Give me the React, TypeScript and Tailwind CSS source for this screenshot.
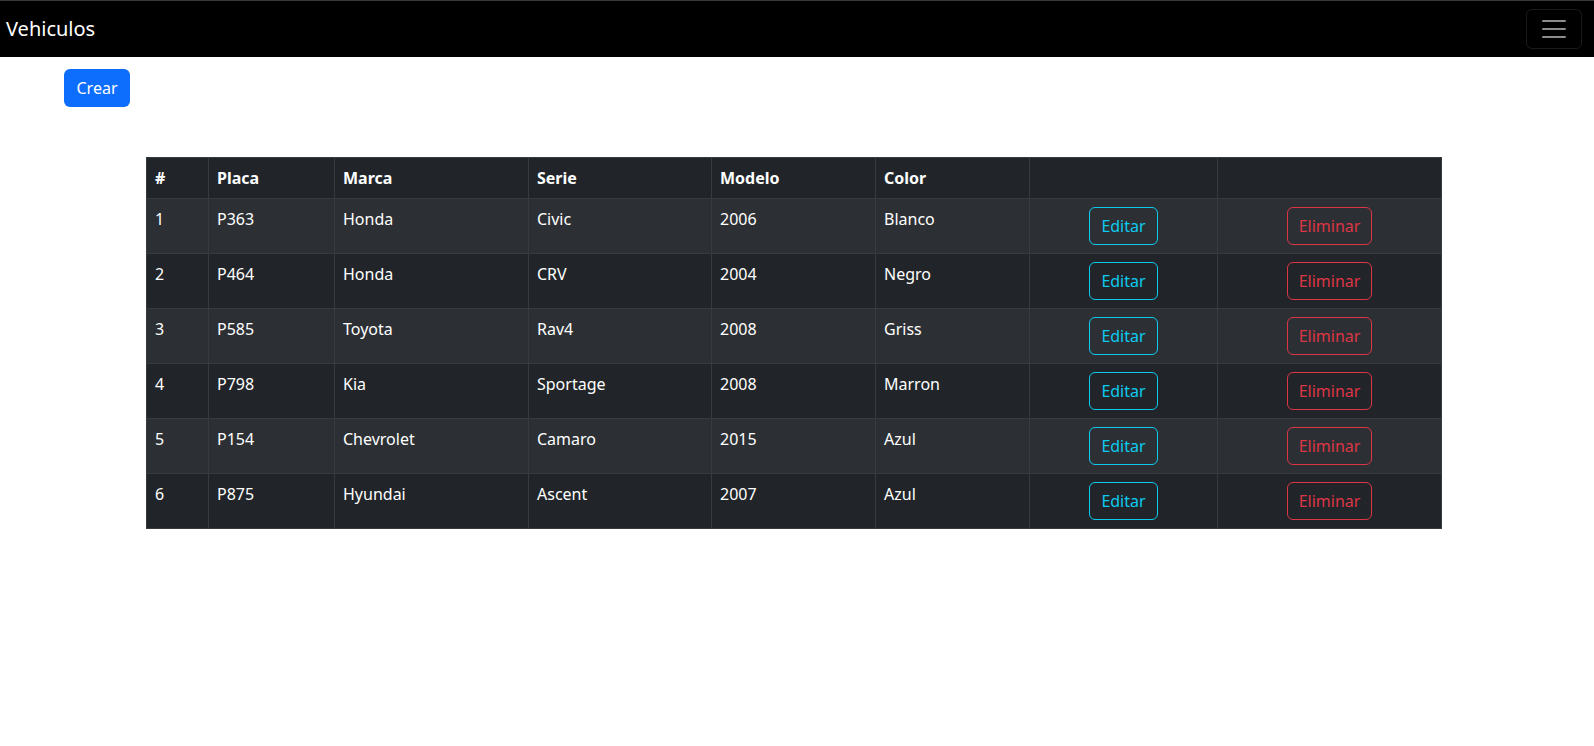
import React from "react";

type Vehiculo = {
  id: number;
  placa: string;
  marca: string;
  serie: string;
  modelo: string;
  color: string;
};

const vehiculos: Vehiculo[] = [
  { id: 1, placa: "P363", marca: "Honda", serie: "Civic", modelo: "2006", color: "Blanco" },
  { id: 2, placa: "P464", marca: "Honda", serie: "CRV", modelo: "2004", color: "Negro" },
  { id: 3, placa: "P585", marca: "Toyota", serie: "Rav4", modelo: "2008", color: "Griss" },
  { id: 4, placa: "P798", marca: "Kia", serie: "Sportage", modelo: "2008", color: "Marron" },
  { id: 5, placa: "P154", marca: "Chevrolet", serie: "Camaro", modelo: "2015", color: "Azul" },
  { id: 6, placa: "P875", marca: "Hyundai", serie: "Ascent", modelo: "2007", color: "Azul" },
];

const base = "border border-[#373b3e] px-2 py-2 align-top leading-6";
const cell = `${base} text-left`;

export default function App() {
  return (
    <div className="min-h-screen bg-white text-[16px] font-['Noto_Sans',sans-serif]">
      <nav className="flex h-[57px] items-center justify-between border-t border-[#3a3a3a] bg-black pl-[6px] pr-[12px]">
        <span className="text-[20px] leading-[30px] text-white">Vehiculos</span>
        <button
          type="button"
          className="flex h-[40px] w-[56px] items-center justify-center rounded-[6px] border border-white/10"
        >
          <svg width="30" height="30" viewBox="0 0 30 30">
            <path
              d="M4 7h22M4 15h22M4 23h22"
              stroke="rgba(255,255,255,0.55)"
              strokeWidth="2"
              strokeLinecap="round"
            />
          </svg>
        </button>
      </nav>

      <div className="pl-[64px] pt-[12px]">
        <button
          type="button"
          className="h-[38px] w-[66px] rounded-[6px] bg-[#0d6efd] text-white"
        >
          Crear
        </button>
      </div>

      <div className="pl-[146px] pt-[50px]">
        <table className="w-[1295px] table-fixed border-collapse border border-[#373b3e] text-white">
          <colgroup>
            <col className="w-[62px]" />
            <col className="w-[126px]" />
            <col className="w-[194px]" />
            <col className="w-[183px]" />
            <col className="w-[164px]" />
            <col className="w-[154px]" />
            <col className="w-[188px]" />
            <col className="w-[224px]" />
          </colgroup>
          <thead>
            <tr className="bg-[#212529] font-bold">
              <th className={cell}>#</th>
              <th className={cell}>Placa</th>
              <th className={cell}>Marca</th>
              <th className={cell}>Serie</th>
              <th className={cell}>Modelo</th>
              <th className={cell}>Color</th>
              <th className={cell}></th>
              <th className={cell}></th>
            </tr>
          </thead>
          <tbody>
            {vehiculos.map((v, i) => (
              <tr key={v.id} className={i % 2 === 0 ? "bg-[#2c3034]" : "bg-[#212529]"}>
                <td className={cell}>{v.id}</td>
                <td className={cell}>{v.placa}</td>
                <td className={cell}>{v.marca}</td>
                <td className={cell}>{v.serie}</td>
                <td className={cell}>{v.modelo}</td>
                <td className={cell}>{v.color}</td>
                <td className={`${base} text-center`}>
                  <button
                    type="button"
                    className="h-[38px] w-[69px] rounded-[6px] border border-[#0dcaf0] text-[#0dcaf0]"
                  >
                    Editar
                  </button>
                </td>
                <td className={`${base} text-center`}>
                  <button
                    type="button"
                    className="h-[38px] w-[85px] rounded-[6px] border border-[#dc3545] text-[#dc3545]"
                  >
                    Eliminar
                  </button>
                </td>
              </tr>
            ))}
          </tbody>
        </table>
      </div>
    </div>
  );
}
